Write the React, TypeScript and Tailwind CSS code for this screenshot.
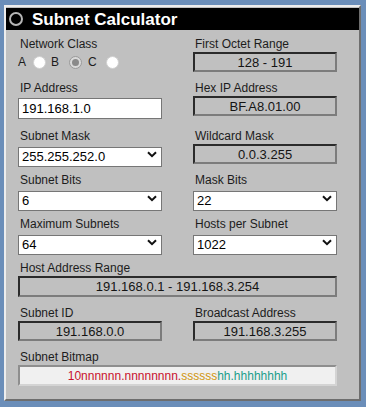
import React, { useState } from 'react';

const font = { fontFamily: '"Liberation Sans", Arial, sans-serif' };

const Label: React.FC<{ children: React.ReactNode }> = ({ children }) => (
  <div className="h-[15px] pl-[2px] text-[12px] leading-[15px] text-[#1c1c1c]">{children}</div>
);

const OutBox: React.FC<{ value: string; tall?: boolean }> = ({ value, tall }) => (
  <div
    className={`${tall ? 'h-[21px]' : 'h-[20px]'} w-full border-2 border-t-[#2b2b2b] border-l-[#2b2b2b] border-r-[#7c7c7c] border-b-[#7c7c7c] bg-[#c0c0c0] flex items-center justify-center text-[13px] leading-none text-[#141414]`}
  >
    {value}
  </div>
);

const Dropdown: React.FC<{ value: string; options: string[] }> = ({ value, options }) => {
  const [v, setV] = useState(value);
  return (
    <div className="relative h-[20px] w-full">
      <select
        value={v}
        onChange={e => setV(e.target.value)}
        className="appearance-none h-full w-full bg-white border border-[#767676] pl-[3px] text-[13px] leading-none text-black outline-none"
      >
        {options.map(o => (
          <option key={o} value={o}>{o}</option>
        ))}
      </select>
      <svg
        width="10"
        height="7"
        viewBox="0 0 10 7"
        className="absolute right-[5px] top-[7px] pointer-events-none"
      >
        <path d="M1 1.2l4 4 4-4" fill="none" stroke="#111" strokeWidth="2" />
      </svg>
    </div>
  );
};

const Radio: React.FC<{ checked?: boolean }> = ({ checked }) =>
  checked ? (
    <span className="flex-none w-[13px] h-[13px] rounded-full bg-[#d9d9d9] border border-[#9a9a9a] flex items-center justify-center">
      <span className="block w-[7px] h-[7px] rounded-full bg-[#8a8a8a]" />
    </span>
  ) : (
    <span className="block flex-none w-[13px] h-[13px] rounded-full bg-white border border-[#d0d0d0]" />
  );

export default function App() {
  const [ip, setIp] = useState('191.168.1.0');

  return (
    <div className="w-[366px] h-[407px] bg-[#6b8eb9] pt-[5px] pl-[4px]" style={font}>
      <div className="w-[357px] h-[396px] bg-[#c0c0c0] border-2 border-t-[#ededed] border-l-[#ededed] border-r-[#6e6e6e] border-b-[#6e6e6e] pt-px">
        {/* Title */}
        <div className="h-[22px] bg-black flex items-center pl-[3px]">
          <span className="block w-[14px] h-[14px] rounded-full border-2 border-[#b5b5b5] bg-black" />
          <span className="ml-[9px] text-[17px] font-bold text-white leading-none">Subnet Calculator</span>
        </div>

        {/* Body */}
        <div className="pl-[12px] pt-[7px] flex flex-col gap-[9px]">
          <div className="grid grid-cols-[144px_144px] gap-x-[31px]">
            <div>
              <Label>Network Class</Label>
              <div className="h-[20px] flex items-center text-[12px] text-[#1c1c1c]">
                <span>A</span>
                <span className="ml-[7px]"><Radio /></span>
                <span className="ml-[5px]">B</span>
                <span className="ml-[10px]"><Radio checked /></span>
                <span className="ml-[6px]">C</span>
                <span className="ml-[9px]"><Radio /></span>
              </div>
            </div>
            <div>
              <Label>First Octet Range</Label>
              <OutBox value="128 - 191" />
            </div>
          </div>

          <div className="grid grid-cols-[144px_144px] gap-x-[31px]">
            <div>
              <Label>IP Address</Label>
              <input
                value={ip}
                onChange={e => setIp(e.target.value)}
                className="h-[21px] w-full bg-white border border-[#767676] pl-[3px] text-[13px] text-black outline-none"
              />
            </div>
            <div>
              <Label>Hex IP Address</Label>
              <OutBox value="BF.A8.01.00" />
            </div>
          </div>

          <div className="grid grid-cols-[144px_144px] gap-x-[31px]">
            <div>
              <Label>Subnet Mask</Label>
              <Dropdown value="255.255.252.0" options={['255.255.0.0', '255.255.128.0', '255.255.192.0', '255.255.224.0', '255.255.240.0', '255.255.248.0', '255.255.252.0', '255.255.254.0']} />
            </div>
            <div>
              <Label>Wildcard Mask</Label>
              <OutBox value="0.0.3.255" />
            </div>
          </div>

          <div className="grid grid-cols-[144px_144px] gap-x-[31px]">
            <div>
              <Label>Subnet Bits</Label>
              <Dropdown value="6" options={['0', '1', '2', '3', '4', '5', '6', '7', '8']} />
            </div>
            <div>
              <Label>Mask Bits</Label>
              <Dropdown value="22" options={['16', '17', '18', '19', '20', '21', '22', '23', '24']} />
            </div>
          </div>

          <div className="grid grid-cols-[144px_144px] gap-x-[31px]">
            <div>
              <Label>Maximum Subnets</Label>
              <Dropdown value="64" options={['1', '2', '4', '8', '16', '32', '64', '128']} />
            </div>
            <div>
              <Label>Hosts per Subnet</Label>
              <Dropdown value="1022" options={['65534', '32766', '16382', '8190', '4094', '2046', '1022', '510']} />
            </div>
          </div>

          <div className="w-[319px]">
            <Label>Host Address Range</Label>
            <OutBox value="191.168.0.1 - 191.168.3.254" tall />
          </div>

          <div className="grid grid-cols-[144px_144px] gap-x-[31px]">
            <div>
              <Label>Subnet ID</Label>
              <OutBox value="191.168.0.0" />
            </div>
            <div>
              <Label>Broadcast Address</Label>
              <OutBox value="191.168.3.255" />
            </div>
          </div>

          <div className="w-[319px]">
            <Label>Subnet Bitmap</Label>
            <div className="h-[21px] w-full bg-[#f0f0f0] border-2 border-t-[#8e8e8e] border-l-[#8e8e8e] border-r-[#d4d4d4] border-b-[#d4d4d4] flex items-center justify-center text-[12px] leading-none">
              <span className="text-[#c8102e]">10nnnnnn.nnnnnnnn.</span>
              <span className="text-[#d0960c]">ssssss</span>
              <span className="text-[#1a9e8a]">hh.hhhhhhhh</span>
            </div>
          </div>
        </div>
      </div>
    </div>
  );
}
